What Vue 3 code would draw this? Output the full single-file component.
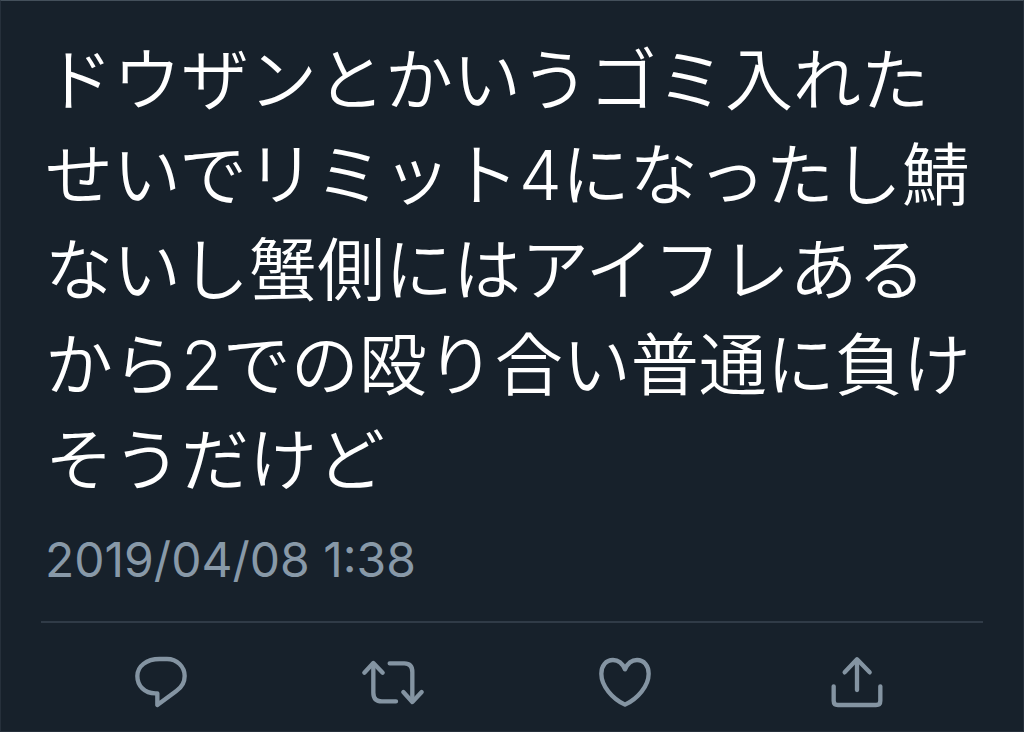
<script setup>
const text =
  'ドウザンとかいうゴミ入れたせいでリミット4になったし鯖ないし蟹側にはアイフレあるから2での殴り合い普通に負けそうだけど'

const actions = [
  {
    label: '返信',
    viewBox: '-13 0 270 255',
    paths: ['M118 57H140C170 57 193 80 193 108C193 127 184 142 168 153L111 195V160H105C73 160 51 138 51 108C51 79 78 57 118 57Z'],
  },
  {
    label: 'リツイート',
    viewBox: '-5 0 270 255',
    paths: ['M44 98L71 69L99 98', 'M71 71V158Q71 184 97 184H139', 'M120 70H164Q188 70 188 96V184', 'M161 156L188 186L216 156'],
  },
  {
    label: 'いいね',
    viewBox: '-14 0 270 255',
    paths: ['M121 88C113 69 101 60 85 60C64 60 50 77 50 101C50 138 83 176 121 194C159 176 192 138 192 101C192 77 178 60 157 60C141 60 129 69 121 88Z'],
  },
  {
    label: '共有',
    viewBox: '-8 0 270 255',
    paths: ['M90 97L127 58L165 97', 'M127 60V150', 'M57 139V182Q57 195 70 195H184Q197 195 197 182V139'],
  },
]
</script>

<template>
  <article class="post">
    <p class="body" lang="ja">{{ text }}</p>
    <time class="date" datetime="2019-04-08T01:38">2019/04/08 1:38</time>
    <footer class="actions">
      <button v-for="a in actions" :key="a.label" type="button" class="action" :aria-label="a.label">
        <svg class="icon" :viewBox="a.viewBox" aria-hidden="true">
          <path v-for="d in a.paths" :key="d" :d="d" />
        </svg>
      </button>
    </footer>
  </article>
</template>

<style>
body {
  margin: 0;
  background: #17212b;
}
</style>

<style scoped>
.post {
  box-sizing: border-box;
  min-height: 100vh;
  padding: 32px 40px 0;
  border: 1px solid #26303b;
  border-top-color: #44505b;
  background: #17212b;
}

.body {
  margin: 0;
  padding: 0 4px;
  color: #fff;
  font-family: Inter, "Noto Sans CJK JP", sans-serif;
  font-size: 68px;
  font-weight: 350;
  line-height: 95px;
}

.date {
  display: block;
  margin-top: 20px;
  padding: 0 4px;
  color: #8899a8;
  font-family: Inter, "Liberation Sans", sans-serif;
  font-size: 48px;
  line-height: 64px;
}

.actions {
  display: grid;
  grid-template-columns: repeat(4, 1fr);
  margin-top: 29px;
  padding: 17px 10px 0 4px;
  border-top: 2px solid #303b47;
}

.action {
  display: flex;
  justify-content: center;
  padding: 0;
  border: 0;
  background: none;
  color: #8494a2;
  cursor: pointer;
}

.icon {
  width: 90px;
  height: 85px;
  fill: none;
  stroke: currentColor;
  stroke-width: 13;
  stroke-linecap: round;
  stroke-linejoin: round;
}
</style>
